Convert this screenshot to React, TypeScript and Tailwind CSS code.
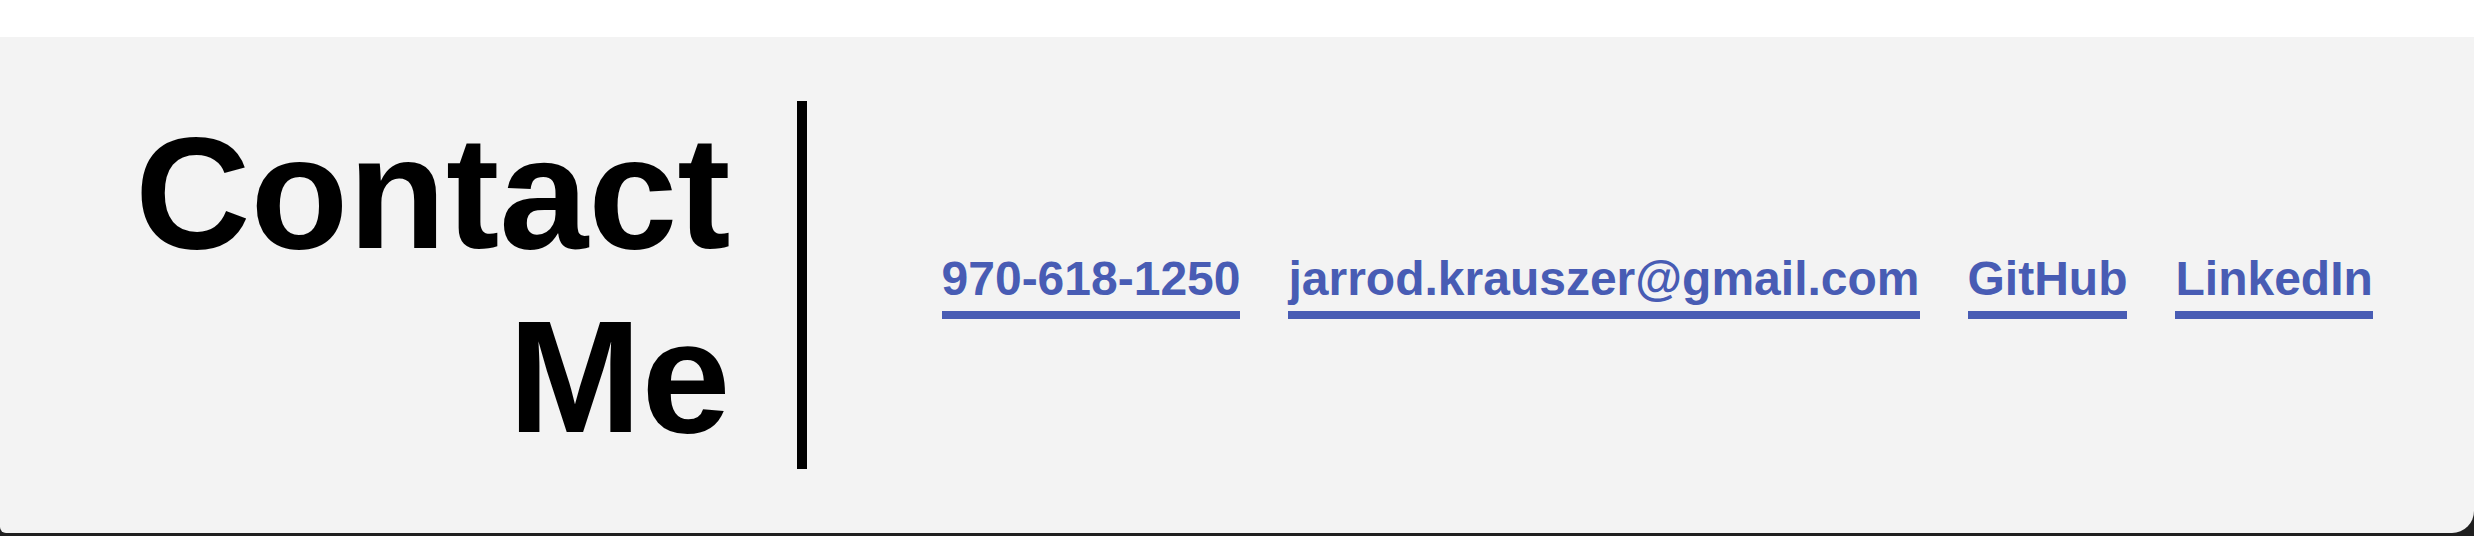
const links = [
  { label: "970-618-1250", href: "tel:9706181250" },
  { label: "jarrod.krauszer@gmail.com", href: "mailto:jarrod.krauszer@gmail.com" },
  { label: "GitHub", href: "#" },
  { label: "LinkedIn", href: "#" },
];

export default function App() {
  return (
    <div className="w-[2474px] h-[536px] bg-[#1f1f1f] overflow-hidden font-['Liberation_Sans',Arial,sans-serif]">
      {/* top gap */}
      <div className="h-[37px] bg-white" />

      {/* Contact panel */}
      <section className="h-[496px] bg-[#f3f3f3] rounded-bl-[6px] rounded-br-[22px] flex items-center">
        <h2 className="ml-[135px] pr-[66px] border-r-[10px] border-black text-right text-black font-bold text-[160px] leading-[184px]">
          Contact
          <br />
          Me
        </h2>

        <nav className="ml-[135px] flex items-center gap-[48px]">
          {links.map((link) => (
            <a
              key={link.label}
              href={link.href}
              className="block text-[48px] leading-[56px] font-bold text-[#485cb4] pb-[4px] border-b-8 border-[#485cb4]"
            >
              {link.label}
            </a>
          ))}
        </nav>
      </section>
    </div>
  );
}
